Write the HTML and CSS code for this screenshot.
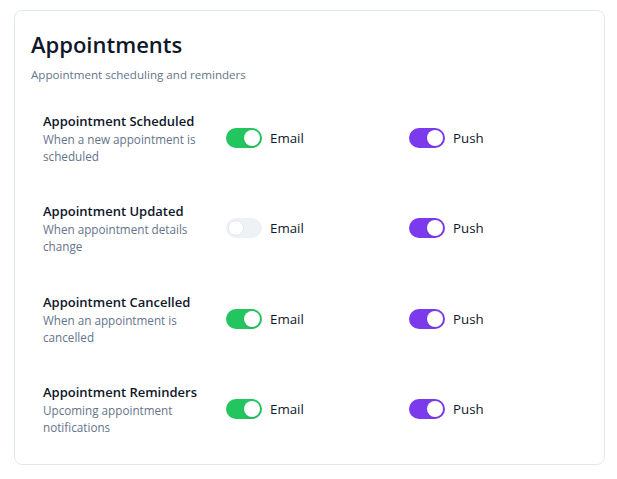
FILE: index.html
```html
<!DOCTYPE html>
<html lang="en">
<head>
<meta charset="utf-8">
<title>Appointments</title>
<link rel="stylesheet" href="styles.css">
</head>
<body>
<div class="page">
  <section class="card">
    <header class="card-header">
      <h2 class="card-title">Appointments</h2>
      <p class="card-subtitle">Appointment scheduling and reminders</p>
    </header>
    <div class="rows">
      <div class="row">
        <div class="info">
          <div class="label">Appointment Scheduled</div>
          <div class="desc">When a new appointment is scheduled</div>
        </div>
        <label class="channel"><span class="toggle on email"><span class="knob"></span></span><span class="ch-text">Email</span></label>
        <label class="channel"><span class="toggle on push"><span class="knob"></span></span><span class="ch-text">Push</span></label>
      </div>
      <div class="row">
        <div class="info">
          <div class="label">Appointment Updated</div>
          <div class="desc">When appointment details change</div>
        </div>
        <label class="channel"><span class="toggle off"><span class="knob"></span></span><span class="ch-text">Email</span></label>
        <label class="channel"><span class="toggle on push"><span class="knob"></span></span><span class="ch-text">Push</span></label>
      </div>
      <div class="row">
        <div class="info">
          <div class="label">Appointment Cancelled</div>
          <div class="desc">When an appointment is cancelled</div>
        </div>
        <label class="channel"><span class="toggle on email"><span class="knob"></span></span><span class="ch-text">Email</span></label>
        <label class="channel"><span class="toggle on push"><span class="knob"></span></span><span class="ch-text">Push</span></label>
      </div>
      <div class="row">
        <div class="info">
          <div class="label">Appointment Reminders</div>
          <div class="desc">Upcoming appointment notifications</div>
        </div>
        <label class="channel"><span class="toggle on email"><span class="knob"></span></span><span class="ch-text">Email</span></label>
        <label class="channel"><span class="toggle on push"><span class="knob"></span></span><span class="ch-text">Push</span></label>
      </div>
    </div>
  </section>
</div>
</body>
</html>
```
FILE: styles.css
```css
* { box-sizing: border-box; }
html, body { margin: 0; padding: 0; background: #ffffff; }
body {
  font-family: "Open Sans", "Noto Sans", sans-serif;
  color: #0f172a;
}
.page {
  padding: 10px 12px 10px 14px;
}
.card {
  border: 1px solid #e2e8f0;
  border-radius: 8px;
  background: #fff;
  padding: 18px 16px 28px 16px;
}
.card-header { margin: 0 0 28px 0; }
.card-title {
  margin: 0;
  font-size: 22px;
  line-height: 30px;
  font-weight: 600;
  color: #0f172a;
}
.card-subtitle {
  margin: 8px 0 0 0;
  font-size: 11.6px;
  line-height: 16px;
  color: #64748b;
}
.rows {
  display: flex;
  flex-direction: column;
  gap: 36.4px;
}
.row {
  display: grid;
  grid-template-columns: 1fr 1fr 1fr;
  column-gap: 16px;
  align-items: center;
  padding: 0 12px;
}
.label {
  font-size: 13px;
  line-height: 20px;
  font-weight: 600;
  color: #0f172a;
}
.desc {
  font-size: 11.7px;
  line-height: 17px;
  color: #64748b;
}
.channel {
  display: flex;
  align-items: center;
  gap: 8px;
  font-size: 13.3px;
  color: #0f172a;
}
.toggle {
  position: relative;
  width: 36px;
  height: 20px;
  border-radius: 10px;
  flex: none;
}
.toggle.email { background: #22c55e; }
.toggle.push { background: #7c3aed; }
.toggle.off { background: #eef2f7; }
.knob {
  position: absolute;
  top: 2px;
  left: 2px;
  width: 16px;
  height: 16px;
  border-radius: 50%;
  background: #fff;
  box-shadow: 0 1px 2px rgba(15, 23, 42, 0.12);
}
.toggle.on .knob { left: 18px; }
.toggle.off .knob { border: 1px solid #e2e8f0; box-shadow: none; }
```
